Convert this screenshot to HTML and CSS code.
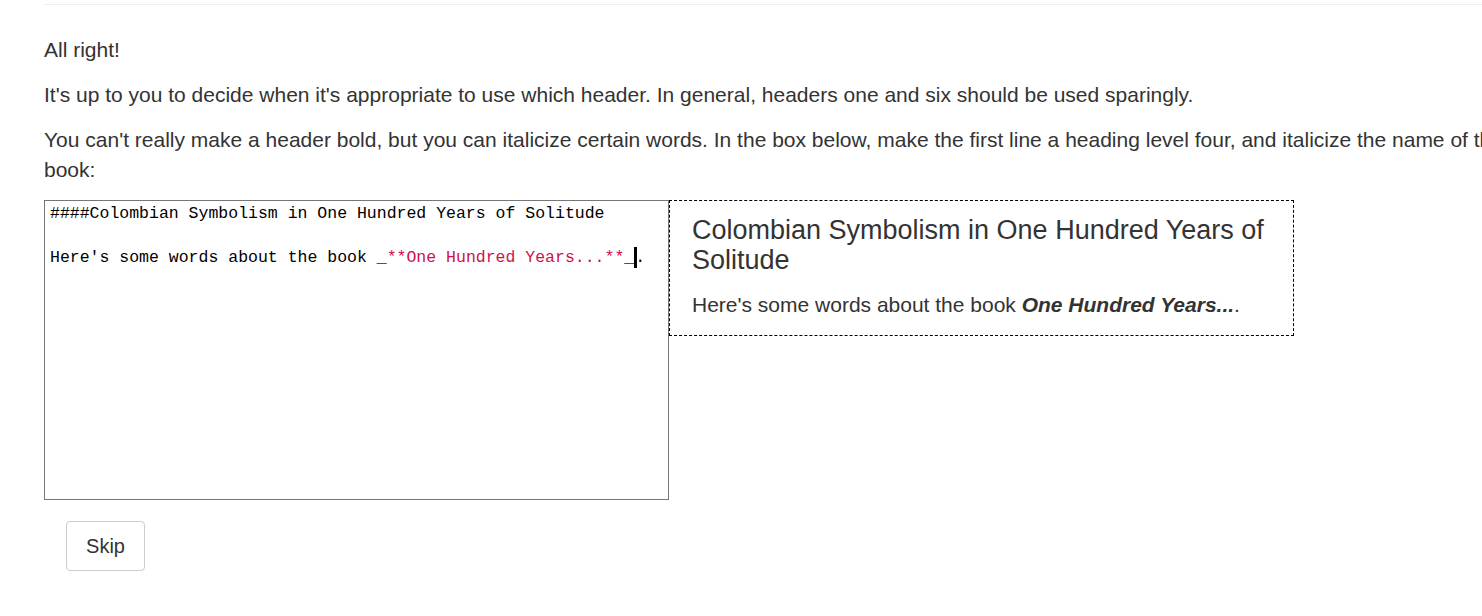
FILE: index.html
```html
<!DOCTYPE html>
<html>
<head>
<meta charset="utf-8">
<link rel="stylesheet" href="styles.css">
</head>
<body>
<div class="page">
  <div class="rule"></div>
  <p class="para">All right!</p>
  <p class="para">It's up to you to decide when it's appropriate to use which header. In general, headers one and six should be used sparingly.</p>
  <p class="para">You can't really make a header bold, but you can italicize certain words. In the box below, make the first line a heading level four, and italicize the name of the book:</p>
  <div class="editor-row">
    <div class="editor">
      <div class="code-line">####Colombian Symbolism in One Hundred Years of Solitude</div>
      <div class="code-line"> </div>
      <div class="code-line">Here's some words about the book <span class="em">_**One Hundred Years...**_</span><span class="cursor"></span>.</div>
    </div>
    <div class="preview">
      <h4 class="preview-title">Colombian Symbolism in One Hundred Years of Solitude</h4>
      <p class="preview-text">Here's some words about the book <em><strong>One Hundred Years...</strong></em>.</p>
    </div>
  </div>
  <button class="skip">Skip</button>
</div>
</body>
</html>
```
FILE: styles.css
```css
html, body {
  margin: 0;
  padding: 0;
  overflow: hidden;
  background: #fff;
}
.page {
  width: 1480px;
  padding-left: 44px;
  font-family: "Liberation Sans", Arial, sans-serif;
  font-size: 21px;
  line-height: 30px;
  color: #333;
}
.rule {
  margin-top: 4px;
  border-top: 1px solid #eee;
  height: 0;
}
.para {
  margin: 0 0 15px 0;
}
.rule + .para {
  margin-top: 30px;
}
.editor-row {
  display: flex;
  align-items: flex-start;
}
.editor {
  box-sizing: border-box;
  width: 625px;
  height: 300px;
  border: 1px solid #767676;
  padding: 2px 5px 0;
  font-family: "Liberation Mono", "DejaVu Sans Mono", monospace;
  font-size: 16.5px;
  line-height: 22px;
  color: #000;
}
.code-line {
  white-space: pre;
  height: 22px;
}
.em {
  color: #d0104c;
}
.cursor {
  display: inline-block;
  width: 3px;
  height: 21px;
  background: #000;
  vertical-align: -6px;
  margin-right: -2px;
}
.preview {
  box-sizing: border-box;
  width: 625px;
  border: 1px dashed #000;
  padding: 14px 22px 15px;
}
.preview-title {
  margin: 0 0 15px 0;
  font-size: 27px;
  line-height: 30px;
  font-weight: normal;
}
.preview-text {
  margin: 0;
}
.skip {
  margin: 21px 0 0 22px;
  height: 50px;
  width: 79px;
  background: #fff;
  border: 1px solid #ccc;
  border-radius: 4px;
  font-family: "Liberation Sans", Arial, sans-serif;
  font-size: 20px;
  color: #333;
  padding: 0;
}
```
